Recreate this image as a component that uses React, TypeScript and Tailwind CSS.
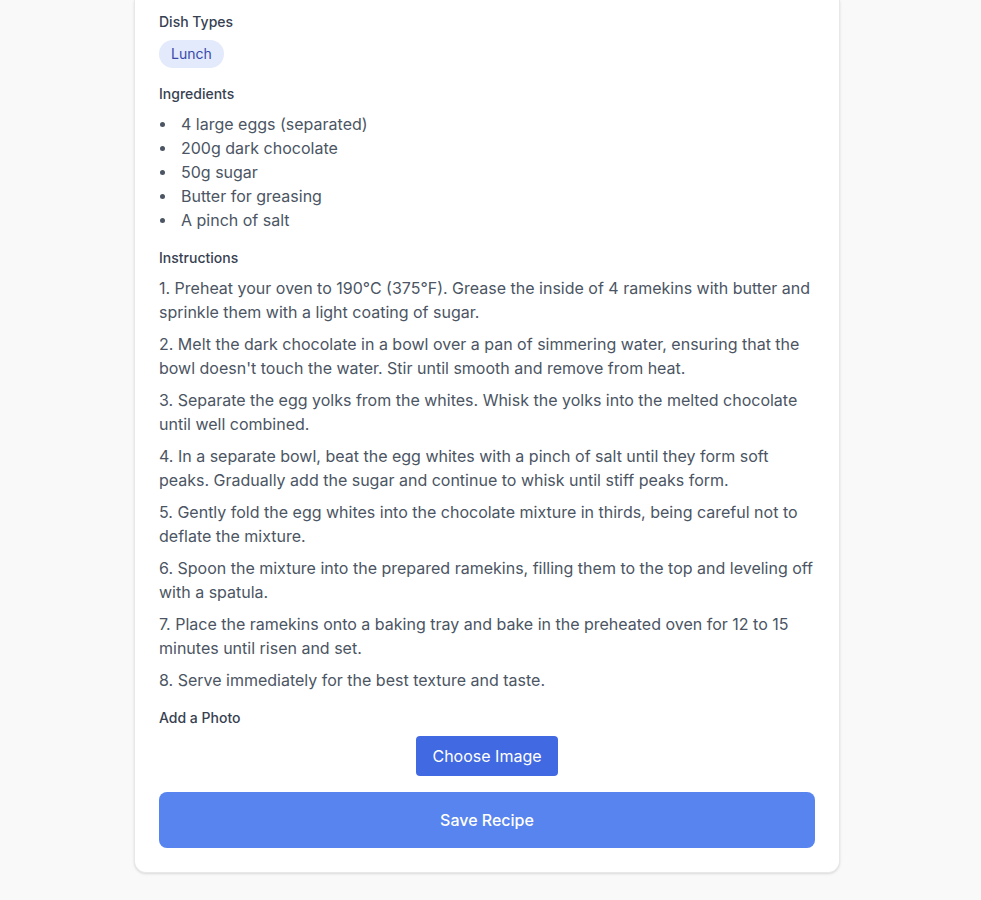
import React from 'react';

const ingredients = [
  '4 large eggs (separated)',
  '200g dark chocolate',
  '50g sugar',
  'Butter for greasing',
  'A pinch of salt',
];

const steps = [
  '1. Preheat your oven to 190°C (375°F). Grease the inside of 4 ramekins with butter and sprinkle them with a light coating of sugar.',
  "2. Melt the dark chocolate in a bowl over a pan of simmering water, ensuring that the bowl doesn't touch the water. Stir until smooth and remove from heat.",
  '3. Separate the egg yolks from the whites. Whisk the yolks into the melted chocolate until well combined.',
  '4. In a separate bowl, beat the egg whites with a pinch of salt until they form soft peaks. Gradually add the sugar and continue to whisk until stiff peaks form.',
  '5. Gently fold the egg whites into the chocolate mixture in thirds, being careful not to deflate the mixture.',
  '6. Spoon the mixture into the prepared ramekins, filling them to the top and leveling off with a spatula.',
  '7. Place the ramekins onto a baking tray and bake in the preheated oven for 12 to 15 minutes until risen and set.',
  '8. Serve immediately for the best texture and taste.',
];

export default function App() {
  return (
    <div
      className="min-h-[900px] bg-[#f9f9f9] flex justify-center pr-[7px]"
      style={{ fontFamily: 'Inter, "Noto Sans", sans-serif' }}
    >
      <div className="w-[706px] mb-[28px] self-start bg-white rounded-b-xl border border-t-0 border-[#e8e8e8] shadow-sm px-6 pt-[12px] pb-6">
        {/* Dish types */}
        <div className="mb-4">
          <p className="text-sm font-medium text-[#374151] mb-2 leading-5">Dish Types</p>
          <div className="flex gap-2">
            <span className="px-3 h-7 leading-7 rounded-full bg-[#e3eafb] text-[#3949ab] text-sm">Lunch</span>
          </div>
        </div>

        {/* Ingredients */}
        <div className="mb-4">
          <p className="text-sm font-medium text-[#374151] mb-2 leading-5">Ingredients</p>
          <ul className="text-base leading-6 text-[#4b5563]">
            {ingredients.map((item) => (
              <li key={item} className="flex items-center">
                <span className="w-[22px] flex">
                  <span className="ml-[1px] w-[5px] h-[5px] rounded-full bg-[#4b5563]" />
                </span>
                <span>{item}</span>
              </li>
            ))}
          </ul>
        </div>

        {/* Instructions */}
        <div className="mb-4">
          <p className="text-sm font-medium text-[#374151] mb-2 leading-5">Instructions</p>
          <div className="flex flex-col gap-2">
            {steps.map((s) => (
              <p key={s} className="text-base leading-6 text-[#4b5563]">{s}</p>
            ))}
          </div>
        </div>

        {/* Photo */}
        <div className="mb-4">
          <p className="text-sm font-medium text-[#374151] mb-2 leading-5">Add a Photo</p>
          <div className="flex justify-center">
            <button className="h-10 w-[142px] rounded bg-[#4169e1] text-white text-base">Choose Image</button>
          </div>
        </div>

        <button className="w-full h-14 rounded-lg bg-[#5784ee] text-white text-base font-medium">Save Recipe</button>
      </div>
    </div>
  );
}
